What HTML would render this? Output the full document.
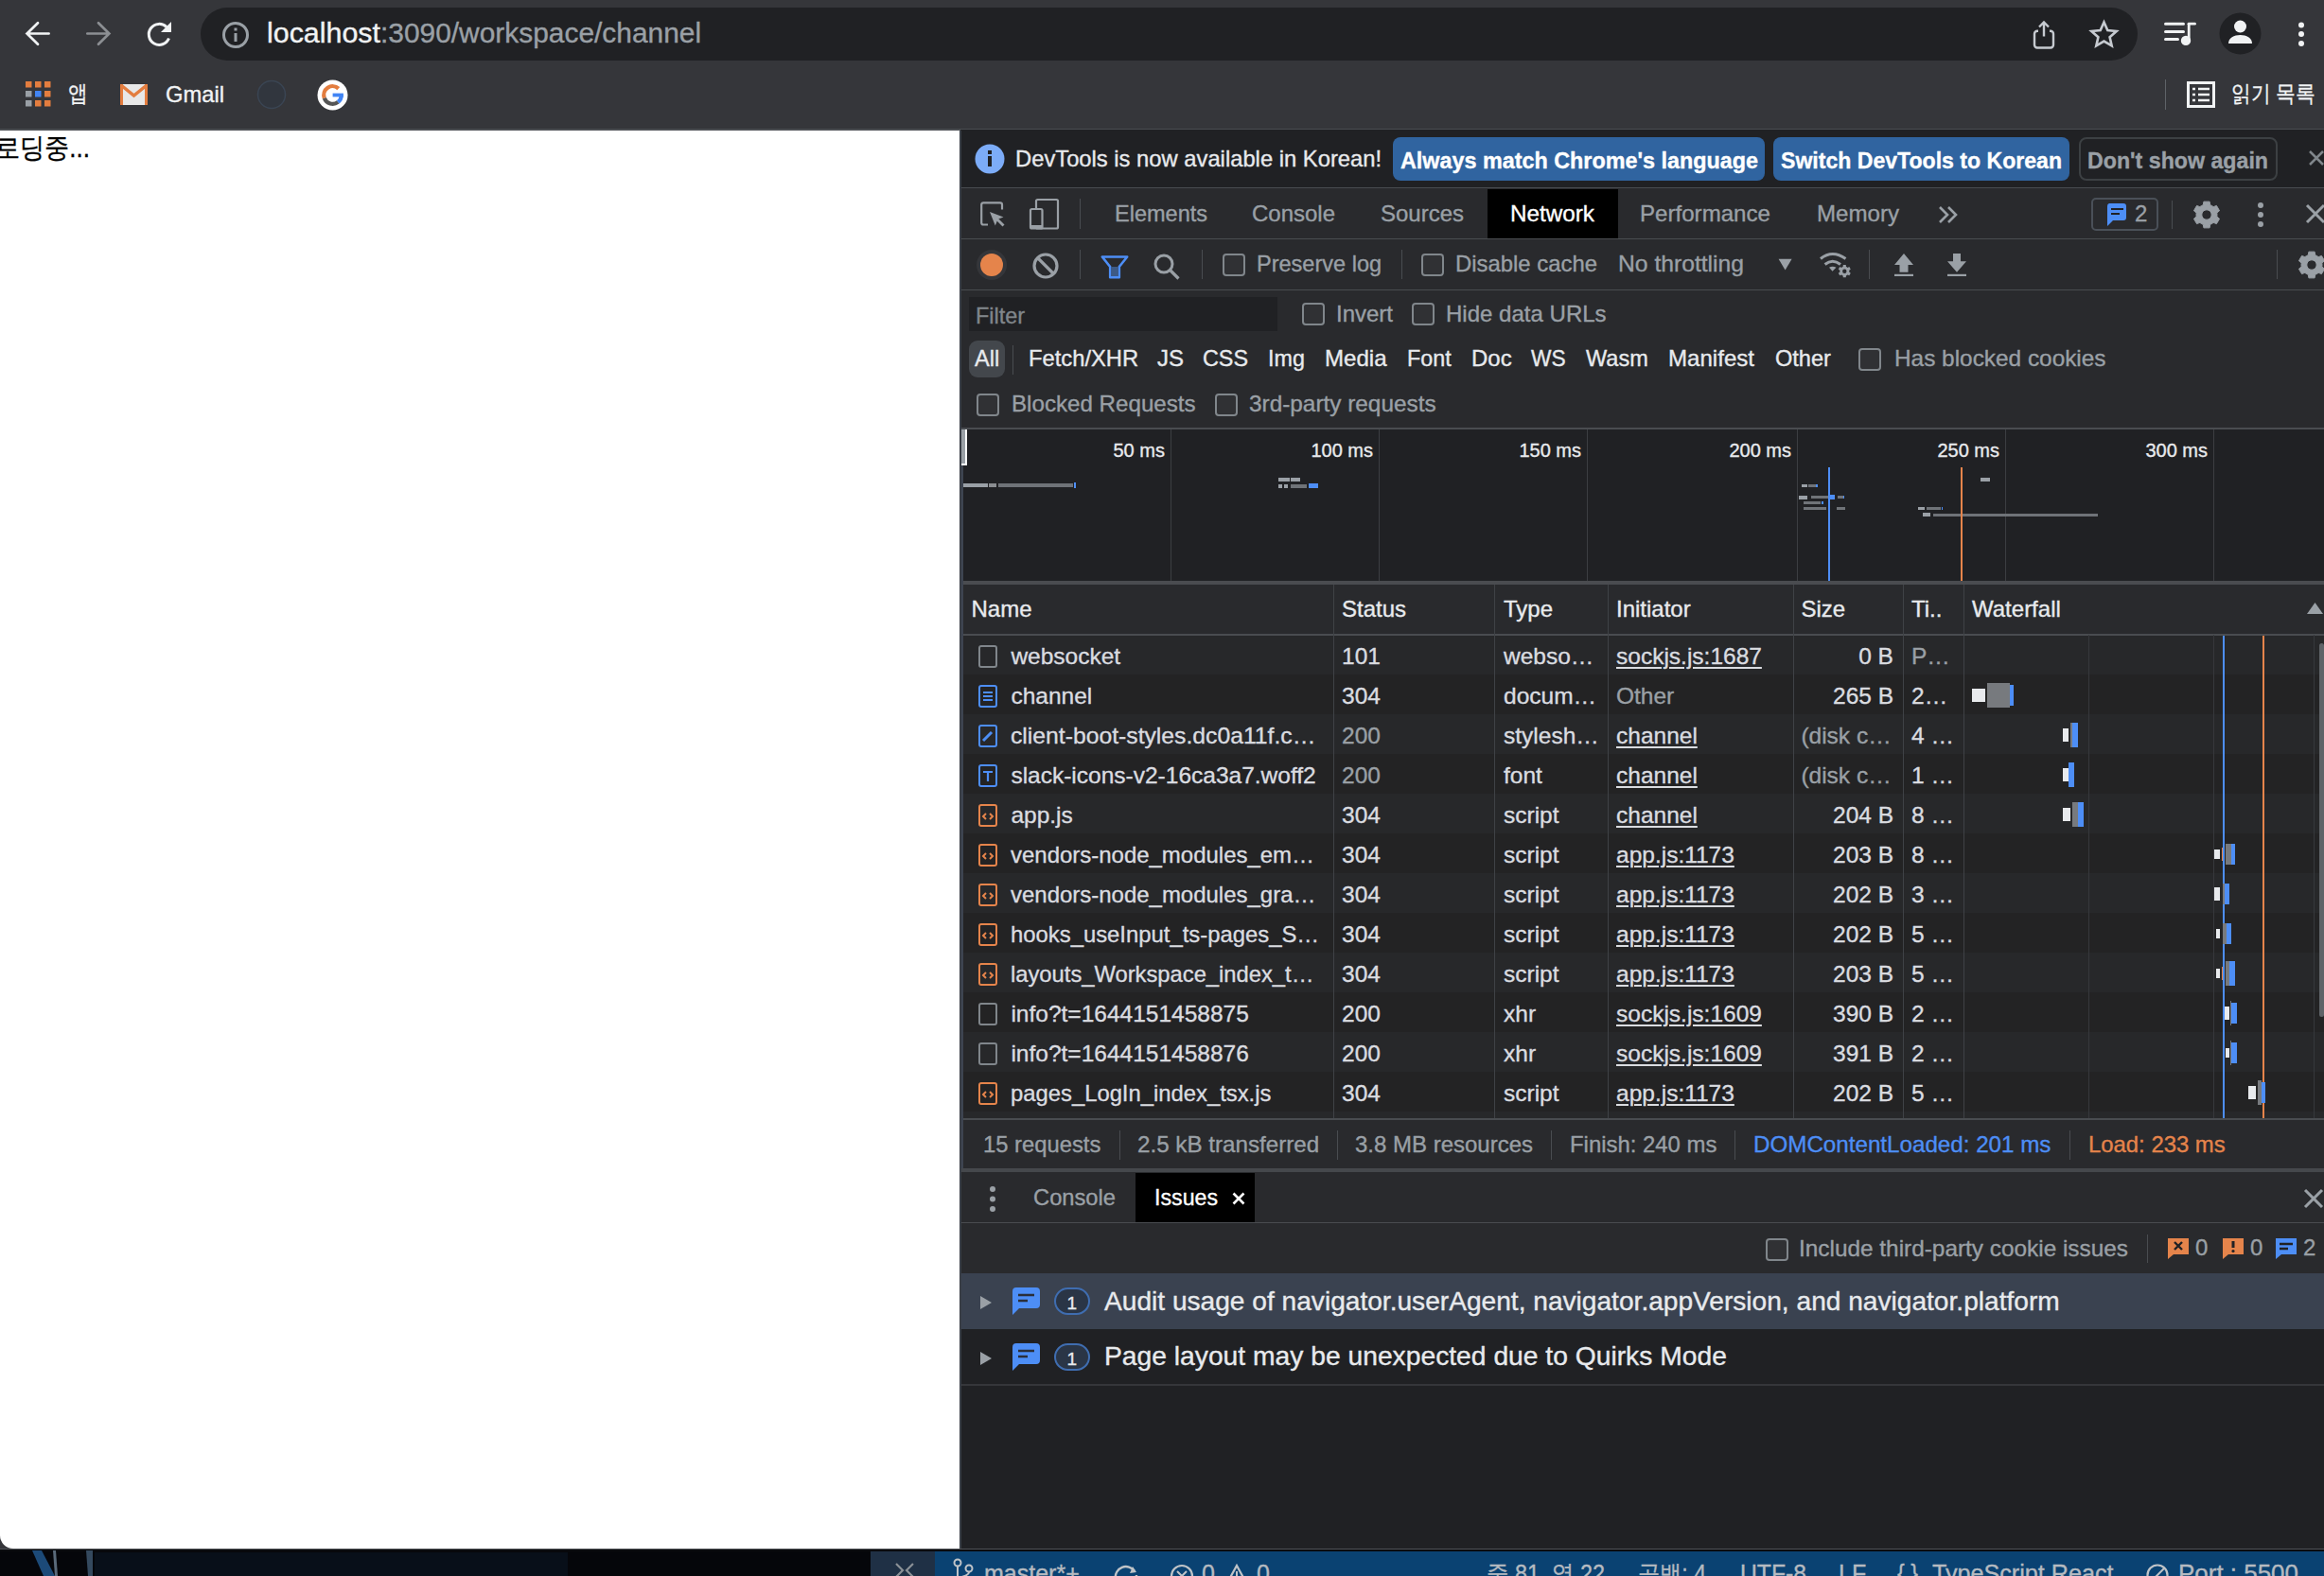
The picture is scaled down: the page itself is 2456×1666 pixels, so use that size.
<!DOCTYPE html>
<html><head><meta charset="utf-8"><style>
html,body{margin:0;padding:0;}
body{width:2456px;height:1666px;overflow:hidden;position:relative;background:#35363a;font-family:"Liberation Sans",sans-serif;}
.r{position:absolute;display:block;}
.t{position:absolute;white-space:nowrap;line-height:1;-webkit-text-stroke:0.35px currentColor;}
</style></head><body>
<div class="r" style="left:0px;top:0px;width:2456px;height:137px;background:#35363a;"></div>
<div class="r" style="left:0px;top:136px;width:2456px;height:2px;background:#4a4d51;"></div>
<div class="r" style="left:212px;top:8px;width:2047px;height:56px;background:#202124;border-radius:28px;"></div>
<svg class="r" style="left:24px;top:20px" width="32" height="32" viewBox="0 0 32 32"><path d="M27.6 15.5H4.5M16 4.2L4.5 15.5 16 26.8" stroke="#f1f3f4" stroke-width="2.7" fill="none" stroke-linecap="round"/></svg>
<svg class="r" style="left:88px;top:20px" width="32" height="32" viewBox="0 0 32 32"><path d="M4.3 15.5H27.4M16 4.2L27.4 15.5 16 26.8" stroke="#8c8f93" stroke-width="2.7" fill="none" stroke-linecap="round"/></svg>
<svg class="r" style="left:153px;top:20px" width="32" height="32" viewBox="0 0 32 32"><path d="M25.5 20.5A11 11 0 1 1 23 8.5" stroke="#f1f3f4" stroke-width="3" fill="none"/><path d="M28 3v11H17z" fill="#f1f3f4"/></svg>
<svg class="r" style="left:234px;top:22px" width="30" height="30" viewBox="0 0 30 30"><circle cx="15" cy="15" r="12.5" stroke="#9aa0a6" stroke-width="3" fill="none"/><rect x="13.5" y="13" width="3" height="9" fill="#9aa0a6"/><rect x="13.5" y="7.5" width="3" height="3" fill="#9aa0a6"/></svg>
<div class="t" style="left:281.5px;top:21.3px;font-size:29px;color:#f1f3f4;transform:scaleX(1.0486);transform-origin:left top;">localhost</div>
<div class="t" style="left:401.5px;top:21.3px;font-size:29px;color:#9aa0a6;transform:scaleX(1.0309);transform-origin:left top;">:3090/workspace/channel</div>
<svg class="r" style="left:2146px;top:20px" width="28" height="32" viewBox="0 0 28 32"><path d="M14 3.5v15M9 8.5l5-5 5 5" stroke="#c6cad0" stroke-width="2.4" fill="none"/><path d="M8 12.8H7a3 3 0 0 0-3 3V27.5a3 3 0 0 0 3 3h14a3 3 0 0 0 3-3V15.8a3 3 0 0 0-3-3h-1" stroke="#c6cad0" stroke-width="2.4" fill="none"/></svg>
<svg class="r" style="left:2207px;top:20px" width="34" height="32" viewBox="0 0 34 32"><path d="M16.5 3.5l3.8 8.6 9.4.9-7.1 6.2 2.1 9.2-8.2-4.8-8.2 4.8 2.1-9.2-7.1-6.2 9.4-.9z" stroke="#c6cad0" stroke-width="2.6" fill="none" stroke-linejoin="miter"/></svg>
<svg class="r" style="left:2286px;top:20px" width="36" height="30" viewBox="0 0 36 30"><path d="M2.5 5.3h19M2.5 13.5h19M2.5 21.5h13" stroke="#f1f3f4" stroke-width="3" stroke-linecap="round"/><path d="M27.2 5v18" stroke="#f1f3f4" stroke-width="2.8"/><path d="M27 5.2h6.5" stroke="#f1f3f4" stroke-width="2.8" stroke-linecap="round"/><circle cx="24" cy="22.9" r="5.2" fill="#f1f3f4"/></svg>
<svg class="r" style="left:2345px;top:13px" width="45" height="45" viewBox="0 0 45 45"><circle cx="22.5" cy="22.5" r="22" fill="#202124"/><circle cx="22.5" cy="15" r="6.5" fill="#f1f3f4"/><path d="M10 33c0-6 6-9 12.5-9S35 27 35 33z" fill="#f1f3f4"/></svg>
<svg class="r" style="left:2424px;top:20px" width="16" height="32" viewBox="0 0 16 32"><circle cx="8" cy="6.5" r="3" fill="#f1f3f4"/><circle cx="8" cy="16" r="3" fill="#f1f3f4"/><circle cx="8" cy="26" r="3" fill="#f1f3f4"/></svg>
<svg class="r" style="left:27px;top:86px" width="27" height="27" viewBox="0 0 27 27"><rect x="0" y="0" width="6.5" height="6.5" fill="#e37d3f"/><rect x="10" y="0" width="6.5" height="6.5" fill="#e37d3f"/><rect x="20" y="0" width="6.5" height="6.5" fill="#e37d3f"/><rect x="0" y="10" width="6.5" height="6.5" fill="#9aa0a6"/><rect x="10" y="10" width="6.5" height="6.5" fill="#4285f4"/><rect x="20" y="10" width="6.5" height="6.5" fill="#e37d3f"/><rect x="0" y="20" width="6.5" height="6.5" fill="#9aa0a6"/><rect x="10" y="20" width="6.5" height="6.5" fill="#e37d3f"/><rect x="20" y="20" width="6.5" height="6.5" fill="#e37d3f"/></svg>
<div class="t" style="left:72.0px;top:86.7px;font-size:24px;color:#f1f3f4;transform:scaleX(0.86);transform-origin:left top;">앱</div>
<svg class="r" style="left:127px;top:89px" width="29" height="22" viewBox="0 0 29 22"><rect x="0" y="0" width="29" height="22" fill="#e8e8e8"/><path d="M1.5 1.5L14.5 12 27.5 1.5" stroke="#e37d3f" stroke-width="3.5" fill="none"/><rect x="0" y="0" width="3" height="22" fill="#e37d3f"/><rect x="26" y="0" width="3" height="22" fill="#e37d3f"/></svg>
<div class="t" style="left:175.0px;top:87.7px;font-size:24px;color:#f1f3f4;transform:scaleX(0.9893);transform-origin:left top;">Gmail</div>
<svg class="r" style="left:271px;top:84px" width="32" height="32" viewBox="0 0 32 32"><circle cx="16" cy="16" r="14.5" fill="#31363e" stroke="#3a4553" stroke-width="1.5"/></svg>
<svg class="r" style="left:335px;top:84px" width="33" height="33" viewBox="0 0 33 33"><circle cx="16.5" cy="16.5" r="16" fill="#fff"/><path d="M22.72 9.59A9.3 9.3 0 0 0 7.76 19.68" stroke="#e37d3f" stroke-width="4.2" fill="none"/><path d="M7.76 19.68A9.3 9.3 0 0 0 22.23 23.83" stroke="#555" stroke-width="4.2" fill="none"/><path d="M22.23 23.83A9.3 9.3 0 0 0 25.8 16.5" stroke="#4285f4" stroke-width="4.2" fill="none"/><rect x="16.6" y="14.6" width="11.3" height="3.8" fill="#4285f4"/></svg>
<div class="r" style="left:2288px;top:84px;width:1px;height:32px;background:#5f6368;"></div>
<svg class="r" style="left:2311px;top:86px" width="30" height="28" viewBox="0 0 30 28"><rect x="1.5" y="1.5" width="27" height="25" stroke="#f1f3f4" stroke-width="3" fill="none"/><path d="M6 8h3M12 8h12M6 14h3M12 14h12M6 20h3M12 20h12" stroke="#f1f3f4" stroke-width="2.5"/></svg>
<div class="t" style="left:2358.0px;top:86.7px;font-size:24px;color:#f1f3f4;transform:scaleX(0.8620);transform-origin:left top;">읽기 목록</div>
<div class="r" style="left:0px;top:138px;width:1014px;height:1499px;background:#ffffff;border-bottom-left-radius:14px;"></div>
<div class="t" style="left:-5.0px;top:141.5px;font-size:29px;color:#000000;transform:scaleX(0.9);transform-origin:left top;">로딩중...</div>
<div class="r" style="left:0px;top:1637px;width:2456px;height:29px;background:#05060a;"></div>
<div class="r" style="left:1014px;top:138px;width:1442px;height:1499px;background:#202124;"></div>
<div class="r" style="left:1014px;top:137px;width:1442px;height:1px;background:#55585c;"></div>
<div class="r" style="left:1014px;top:138px;width:2px;height:1499px;background:#3a3e45;"></div>
<div class="r" style="left:1015px;top:137px;width:1442px;height:61px;background:#202124;"></div>
<div class="r" style="left:1015px;top:198px;width:1442px;height:1px;background:#494c50;"></div>
<svg class="r" style="left:1030px;top:152px" width="32" height="32" viewBox="0 0 32 32"><circle cx="16" cy="16" r="15.5" fill="#7cacf8"/><rect x="14" y="13" width="4" height="11" fill="#202124"/><rect x="14" y="7" width="4" height="4" fill="#202124"/></svg>
<div class="t" style="left:1073.0px;top:155.7px;font-size:24px;color:#e8eaed;transform:scaleX(0.9902);transform-origin:left top;">DevTools is now available in Korean!</div>
<div class="r" style="left:1472px;top:145px;width:393px;height:46px;background:#3064a0;border-radius:8px;"></div>
<div class="t" style="left:1480.0px;top:158.5px;font-size:23px;color:#ffffff;font-weight:bold;transform:scaleX(1.0152);transform-origin:left top;">Always match Chrome's language</div>
<div class="r" style="left:1874px;top:145px;width:313px;height:46px;background:#3064a0;border-radius:8px;"></div>
<div class="t" style="left:1882.0px;top:158.5px;font-size:23px;color:#ffffff;font-weight:bold;transform:scaleX(1.0031);transform-origin:left top;">Switch DevTools to Korean</div>
<div class="r" style="left:2197px;top:145px;width:210px;height:46px;background:transparent;border:2px solid #3c4043;box-sizing:border-box;border-radius:8px;"></div>
<div class="t" style="left:2206.0px;top:158.5px;font-size:23px;color:#9aa0a6;font-weight:bold;transform:scaleX(1.0081);transform-origin:left top;">Don't show again</div>
<svg class="r" style="left:2439px;top:158px" width="18" height="18" viewBox="0 0 18 18"><path d="M2 2l14 14M16 2L2 16" stroke="#80868b" stroke-width="2.5"/></svg>
<div class="r" style="left:1015px;top:199px;width:1442px;height:53px;background:#292a2d;"></div>
<div class="r" style="left:1015px;top:252px;width:1442px;height:1px;background:#494c50;"></div>
<svg class="r" style="left:1034px;top:212px" width="30" height="30" viewBox="0 0 30 30"><path d="M10 25.5H5.2a2 2 0 0 1-2-2V4.3a2 2 0 0 1 2-2H23a2 2 0 0 1 2 2V9.5" stroke="#9aa0a6" stroke-width="2.2" fill="none"/><path d="M12 12L26.5 17.5 20.5 19.8 17.8 26.5z" fill="#9aa0a6"/><path d="M19.5 19.5L26.5 26.5" stroke="#9aa0a6" stroke-width="2.8"/></svg>
<svg class="r" style="left:1086px;top:209px" width="34" height="34" viewBox="0 0 34 34"><rect x="9" y="2" width="23" height="30.5" stroke="#9aa0a6" stroke-width="2.2" fill="none" rx="1.5"/><rect x="3" y="12" width="12.5" height="20.5" stroke="#9aa0a6" stroke-width="2.2" fill="#292a2d" rx="1.5"/><rect x="3" y="29" width="12.5" height="3.5" fill="#9aa0a6"/></svg>
<div class="r" style="left:1141px;top:210px;width:1px;height:32px;background:#494c50;"></div>
<div class="t" style="left:1178.0px;top:213.7px;font-size:24px;color:#9aa0a6;transform:scaleX(0.9795);transform-origin:left top;">Elements</div>
<div class="t" style="left:1323.0px;top:213.7px;font-size:24px;color:#9aa0a6;transform:scaleX(0.9996);transform-origin:left top;">Console</div>
<div class="t" style="left:1459.0px;top:213.7px;font-size:24px;color:#9aa0a6;transform:scaleX(0.9995);transform-origin:left top;">Sources</div>
<div class="r" style="left:1572px;top:200px;width:138px;height:52px;background:#000000;"></div>
<div class="t" style="left:1596.0px;top:213.7px;font-size:24px;color:#ffffff;transform:scaleX(1.0112);transform-origin:left top;">Network</div>
<div class="t" style="left:1733.0px;top:213.7px;font-size:24px;color:#9aa0a6;transform:scaleX(1.0043);transform-origin:left top;">Performance</div>
<div class="t" style="left:1920.0px;top:213.7px;font-size:24px;color:#9aa0a6;transform:scaleX(1.0036);transform-origin:left top;">Memory</div>
<svg class="r" style="left:2048px;top:217px" width="22" height="20" viewBox="0 0 22 20"><path d="M2 2l8 8-8 8M11 2l8 8-8 8" stroke="#9aa0a6" stroke-width="2.6" fill="none"/></svg>
<div class="r" style="left:2210px;top:209px;width:71px;height:35px;background:transparent;border:2px solid #4a5058;box-sizing:border-box;border-radius:5px;"></div>
<svg class="r" style="left:2224px;top:214px" width="26" height="26" viewBox="0 0 26 26"><path d="M5 1h15a3 3 0 0 1 3 3v12a3 3 0 0 1-3 3H9l-6 6V4a3 3 0 0 1 2-3z" fill="#4d8ef6"/><path d="M7 7h13M7 12h9" stroke="#202124" stroke-width="2.2"/></svg>
<div class="t" style="left:2256.0px;top:213.7px;font-size:24px;color:#9aa0a6;">2</div>
<div class="r" style="left:2295px;top:212px;width:1px;height:30px;background:#494c50;"></div>
<svg class="r" style="left:2316px;top:211px" width="32" height="32" viewBox="0 0 32 32"><path fill="#9aa0a6" fill-rule="evenodd" stroke="#9aa0a6" stroke-width="1" stroke-linejoin="round" d="M10.50 6.47 L12.33 5.63 L12.90 2.14 L19.10 2.14 L19.67 5.63 L21.50 6.47 L23.15 7.64 L26.45 6.39 L29.55 11.75 L26.81 13.99 L27.00 16.00 L26.81 18.01 L29.55 20.25 L26.45 25.61 L23.15 24.36 L21.50 25.53 L19.67 26.37 L19.10 29.86 L12.90 29.86 L12.33 26.37 L10.50 25.53 L8.85 24.36 L5.55 25.61 L2.45 20.25 L5.19 18.01 L5.00 16.00 L5.19 13.99 L2.45 11.75 L5.55 6.39 L8.85 7.64ZM21.20 16.00A5.2 5.2 0 1 0 10.80 16.00A5.2 5.2 0 1 0 21.20 16.00Z"/></svg>
<svg class="r" style="left:2381px;top:211px" width="16" height="32" viewBox="0 0 16 32"><circle cx="8" cy="6" r="3" fill="#9aa0a6"/><circle cx="8" cy="16" r="3" fill="#9aa0a6"/><circle cx="8" cy="26" r="3" fill="#9aa0a6"/></svg>
<svg class="r" style="left:2436px;top:215px" width="22" height="24" viewBox="0 0 22 24"><path d="M2 2l18 18M20 2L2 20" stroke="#9aa0a6" stroke-width="3"/></svg>
<div class="r" style="left:1015px;top:253px;width:1442px;height:53px;background:#292a2d;"></div>
<div class="r" style="left:1015px;top:306px;width:1442px;height:1px;background:#494c50;"></div>
<svg class="r" style="left:1031px;top:263px" width="34" height="34" viewBox="0 0 34 34"><circle cx="17" cy="17" r="16" fill="#35363a"/><circle cx="17" cy="17" r="12" fill="#e5844b"/></svg>
<svg class="r" style="left:1090px;top:266px" width="30" height="30" viewBox="0 0 30 30"><circle cx="15" cy="15" r="12" stroke="#9aa0a6" stroke-width="3.2" fill="none"/><path d="M7 7l16 16" stroke="#9aa0a6" stroke-width="3.2"/></svg>
<div class="r" style="left:1141px;top:264px;width:1px;height:31px;background:#494c50;"></div>
<svg class="r" style="left:1162px;top:269px" width="32" height="27" viewBox="0 0 32 27"><path d="M2.8 2.5H29.2L20.8 13V24.3H11.2V13Z" stroke="#4d8ef6" stroke-width="2.6" fill="none" stroke-linejoin="round"/><rect x="12.5" y="13" width="7" height="10" fill="#3d5a85"/></svg>
<svg class="r" style="left:1218px;top:267px" width="32" height="30" viewBox="0 0 32 30"><circle cx="12" cy="12" r="9" stroke="#9aa0a6" stroke-width="3" fill="none"/><path d="M18.5 18.5l9 9" stroke="#9aa0a6" stroke-width="3.2"/></svg>
<div class="r" style="left:1270px;top:264px;width:1px;height:31px;background:#494c50;"></div>
<div class="r" style="left:1292px;top:268px;width:24px;height:24px;background:#303134;border:2px solid #80868b;box-sizing:border-box;border-radius:4px;"></div>
<div class="t" style="left:1328.0px;top:266.7px;font-size:24px;color:#9aa0a6;transform:scaleX(0.9802);transform-origin:left top;">Preserve log</div>
<div class="r" style="left:1481px;top:264px;width:1px;height:31px;background:#494c50;"></div>
<div class="r" style="left:1502px;top:268px;width:24px;height:24px;background:#303134;border:2px solid #80868b;box-sizing:border-box;border-radius:4px;"></div>
<div class="t" style="left:1538.0px;top:266.7px;font-size:24px;color:#9aa0a6;transform:scaleX(0.9952);transform-origin:left top;">Disable cache</div>
<div class="t" style="left:1710.0px;top:266.7px;font-size:24px;color:#9aa0a6;transform:scaleX(1.0279);transform-origin:left top;">No throttling</div>
<svg class="r" style="left:1878px;top:272px" width="18" height="15" viewBox="0 0 18 15"><path d="M1.6 1.8h14L8.6 13.6z" fill="#9aa0a6"/></svg>
<svg class="r" style="left:1920px;top:264px" width="38" height="32" viewBox="0 0 38 32"><path d="M4 9.5Q16.4 -0.5 30.5 9.5" stroke="#9aa0a6" stroke-width="3" fill="none"/><path d="M8.6 15.5Q16.6 9 25 15.5" stroke="#9aa0a6" stroke-width="3" fill="none"/><path d="M13 18.8Q16.6 16.8 20.5 18.8L16.5 22.8Z" fill="#9aa0a6"/><path fill="#9aa0a6" fill-rule="evenodd" d="M26.80 18.37 L27.63 17.99 L27.82 16.06 L30.78 16.06 L30.97 17.99 L31.80 18.37 L32.55 18.90 L34.31 18.10 L35.79 20.67 L34.22 21.79 L34.30 22.70 L34.22 23.61 L35.79 24.73 L34.31 27.30 L32.55 26.50 L31.80 27.03 L30.97 27.41 L30.78 29.34 L27.82 29.34 L27.63 27.41 L26.80 27.03 L26.05 26.50 L24.29 27.30 L22.81 24.73 L24.38 23.61 L24.30 22.70 L24.38 21.79 L22.81 20.67 L24.29 18.10 L26.05 18.90ZM31.50 22.70A2.2 2.2 0 1 0 27.10 22.70A2.2 2.2 0 1 0 31.50 22.70Z"/></svg>
<div class="r" style="left:1975px;top:264px;width:1px;height:31px;background:#494c50;"></div>
<svg class="r" style="left:1999px;top:266px" width="26" height="30" viewBox="0 0 26 30"><path d="M13 2l10 12h-5.5v7.7h-9V14H3z" fill="#9aa0a6"/><rect x="3" y="23.8" width="20" height="2.2" fill="#9aa0a6"/></svg>
<svg class="r" style="left:2055px;top:266px" width="26" height="30" viewBox="0 0 26 30"><path d="M13 21.7L3 10.3h6V2h8v8.3h6z" fill="#9aa0a6"/><rect x="3" y="23.8" width="20" height="2.2" fill="#9aa0a6"/></svg>
<div class="r" style="left:2406px;top:264px;width:1px;height:31px;background:#494c50;"></div>
<svg class="r" style="left:2427px;top:264px" width="32" height="32" viewBox="0 0 32 32"><path fill="#9aa0a6" fill-rule="evenodd" stroke="#9aa0a6" stroke-width="1" stroke-linejoin="round" d="M10.50 6.47 L12.33 5.63 L12.90 2.14 L19.10 2.14 L19.67 5.63 L21.50 6.47 L23.15 7.64 L26.45 6.39 L29.55 11.75 L26.81 13.99 L27.00 16.00 L26.81 18.01 L29.55 20.25 L26.45 25.61 L23.15 24.36 L21.50 25.53 L19.67 26.37 L19.10 29.86 L12.90 29.86 L12.33 26.37 L10.50 25.53 L8.85 24.36 L5.55 25.61 L2.45 20.25 L5.19 18.01 L5.00 16.00 L5.19 13.99 L2.45 11.75 L5.55 6.39 L8.85 7.64ZM21.20 16.00A5.2 5.2 0 1 0 10.80 16.00A5.2 5.2 0 1 0 21.20 16.00Z"/></svg>
<div class="r" style="left:1015px;top:307px;width:1442px;height:146px;background:#292a2d;"></div>
<div class="r" style="left:1015px;top:452px;width:1442px;height:2px;background:#494c50;"></div>
<div class="r" style="left:1024px;top:314px;width:326px;height:36px;background:#202124;"></div>
<div class="t" style="left:1031.0px;top:321.7px;font-size:24px;color:#80868b;transform:scaleX(0.9756);transform-origin:left top;">Filter</div>
<div class="r" style="left:1376px;top:320px;width:24px;height:24px;background:#303134;border:2px solid #80868b;box-sizing:border-box;border-radius:4px;"></div>
<div class="t" style="left:1412.0px;top:319.7px;font-size:24px;color:#9aa0a6;transform:scaleX(1.0000);transform-origin:left top;">Invert</div>
<div class="r" style="left:1492px;top:320px;width:24px;height:24px;background:#303134;border:2px solid #80868b;box-sizing:border-box;border-radius:4px;"></div>
<div class="t" style="left:1528.0px;top:319.7px;font-size:24px;color:#9aa0a6;transform:scaleX(1.0012);transform-origin:left top;">Hide data URLs</div>
<div class="r" style="left:1024px;top:360px;width:38px;height:39px;background:#43474c;border-radius:9px;"></div>
<div class="t" style="left:1030.0px;top:367.2px;font-size:24px;color:#e8eaed;transform:scaleX(0.9803);transform-origin:left top;">All</div>
<div class="r" style="left:1070px;top:365px;width:1px;height:31px;background:#494c50;"></div>
<div class="t" style="left:1086.7px;top:367.2px;font-size:24px;color:#e8eaed;transform:scaleX(0.9893);transform-origin:left top;">Fetch/XHR</div>
<div class="t" style="left:1222.8px;top:367.2px;font-size:24px;color:#e8eaed;transform:scaleX(0.9994);transform-origin:left top;">JS</div>
<div class="t" style="left:1270.8px;top:367.2px;font-size:24px;color:#e8eaed;transform:scaleX(0.9725);transform-origin:left top;">CSS</div>
<div class="t" style="left:1340.0px;top:367.2px;font-size:24px;color:#e8eaed;transform:scaleX(0.9721);transform-origin:left top;">Img</div>
<div class="t" style="left:1400.0px;top:367.2px;font-size:24px;color:#e8eaed;transform:scaleX(1.0037);transform-origin:left top;">Media</div>
<div class="t" style="left:1487.0px;top:367.2px;font-size:24px;color:#e8eaed;transform:scaleX(0.9705);transform-origin:left top;">Font</div>
<div class="t" style="left:1555.0px;top:367.2px;font-size:24px;color:#e8eaed;transform:scaleX(0.9983);transform-origin:left top;">Doc</div>
<div class="t" style="left:1618.4px;top:367.2px;font-size:24px;color:#e8eaed;transform:scaleX(0.9464);transform-origin:left top;">WS</div>
<div class="t" style="left:1676.0px;top:367.2px;font-size:24px;color:#e8eaed;transform:scaleX(0.9805);transform-origin:left top;">Wasm</div>
<div class="t" style="left:1763.0px;top:367.2px;font-size:24px;color:#e8eaed;transform:scaleX(1.0033);transform-origin:left top;">Manifest</div>
<div class="t" style="left:1875.5px;top:367.2px;font-size:24px;color:#e8eaed;transform:scaleX(0.9812);transform-origin:left top;">Other</div>
<div class="r" style="left:1964px;top:368px;width:24px;height:24px;background:#303134;border:2px solid #80868b;box-sizing:border-box;border-radius:4px;"></div>
<div class="t" style="left:2001.5px;top:367.2px;font-size:24px;color:#9aa0a6;transform:scaleX(1.0155);transform-origin:left top;">Has blocked cookies</div>
<div class="r" style="left:1032px;top:416px;width:24px;height:24px;background:#303134;border:2px solid #80868b;box-sizing:border-box;border-radius:4px;"></div>
<div class="t" style="left:1069.0px;top:415.2px;font-size:24px;color:#9aa0a6;transform:scaleX(1.0061);transform-origin:left top;">Blocked Requests</div>
<div class="r" style="left:1284px;top:416px;width:24px;height:24px;background:#303134;border:2px solid #80868b;box-sizing:border-box;border-radius:4px;"></div>
<div class="t" style="left:1320.0px;top:415.2px;font-size:24px;color:#9aa0a6;transform:scaleX(1.0146);transform-origin:left top;">3rd-party requests</div>
<div class="r" style="left:1015px;top:454px;width:1442px;height:160px;background:#202124;"></div>
<div class="r" style="left:1015px;top:614px;width:1442px;height:4px;background:#4a4c50;"></div>
<div class="r" style="left:1237px;top:454px;width:1px;height:160px;background:#3c3e42;"></div>
<div class="t" style="left:1176.5px;top:465.5px;font-size:20px;color:#e8eaed;">50 ms</div>
<div class="r" style="left:1457px;top:454px;width:1px;height:160px;background:#3c3e42;"></div>
<div class="t" style="left:1385.4px;top:465.5px;font-size:20px;color:#e8eaed;">100 ms</div>
<div class="r" style="left:1677px;top:454px;width:1px;height:160px;background:#3c3e42;"></div>
<div class="t" style="left:1605.4px;top:465.5px;font-size:20px;color:#e8eaed;">150 ms</div>
<div class="r" style="left:1899px;top:454px;width:1px;height:160px;background:#3c3e42;"></div>
<div class="t" style="left:1827.4px;top:465.5px;font-size:20px;color:#e8eaed;">200 ms</div>
<div class="r" style="left:2119px;top:454px;width:1px;height:160px;background:#3c3e42;"></div>
<div class="t" style="left:2047.4px;top:465.5px;font-size:20px;color:#e8eaed;">250 ms</div>
<div class="r" style="left:2339px;top:454px;width:1px;height:160px;background:#3c3e42;"></div>
<div class="t" style="left:2267.4px;top:465.5px;font-size:20px;color:#e8eaed;">300 ms</div>
<div class="r" style="left:1016px;top:454px;width:4px;height:37px;background:#9aa0a6;"></div>
<div class="r" style="left:1020px;top:454px;width:2px;height:38px;background:#ffffff;"></div>
<div class="r" style="left:1016px;top:490px;width:6px;height:2px;background:#ffffff;"></div>
<div class="r" style="left:1017px;top:511px;width:27px;height:4px;background:#9aa0a6;"></div>
<div class="r" style="left:1045px;top:511px;width:8px;height:4px;background:#8a8d91;"></div>
<div class="r" style="left:1055px;top:511px;width:79px;height:4px;background:#6f7378;"></div>
<div class="r" style="left:1135px;top:510px;width:2px;height:6px;background:#4d8ef6;"></div>
<div class="r" style="left:1351px;top:505px;width:12px;height:4px;background:#9aa0a6;"></div>
<div class="r" style="left:1364px;top:505px;width:10px;height:4px;background:#9aa0a6;"></div>
<div class="r" style="left:1351px;top:512px;width:4px;height:4px;background:#9aa0a6;"></div>
<div class="r" style="left:1357px;top:512px;width:4px;height:4px;background:#9aa0a6;"></div>
<div class="r" style="left:1364px;top:512px;width:17px;height:4px;background:#6f7378;"></div>
<div class="r" style="left:1383px;top:511px;width:10px;height:5px;background:#4d8ef6;"></div>
<div class="r" style="left:1904px;top:512px;width:6px;height:3px;background:#9aa0a6;"></div>
<div class="r" style="left:1911px;top:512px;width:8px;height:3px;background:#6f7378;"></div>
<div class="r" style="left:1919px;top:512px;width:2px;height:3px;background:#4d8ef6;"></div>
<div class="r" style="left:1901px;top:524px;width:9px;height:4px;background:#9aa0a6;"></div>
<div class="r" style="left:1914px;top:524px;width:20px;height:3px;background:#6f7378;"></div>
<div class="r" style="left:1934px;top:523px;width:5px;height:5px;background:#4d8ef6;"></div>
<div class="r" style="left:1942px;top:524px;width:6px;height:3px;background:#6f7378;"></div>
<div class="r" style="left:1948px;top:524px;width:1px;height:3px;background:#4d8ef6;"></div>
<div class="r" style="left:1906px;top:530px;width:18px;height:3px;background:#6f7378;"></div>
<div class="r" style="left:1925px;top:530px;width:2px;height:3px;background:#4d8ef6;"></div>
<div class="r" style="left:1906px;top:536px;width:24px;height:3px;background:#6f7378;"></div>
<div class="r" style="left:1941px;top:536px;width:9px;height:3px;background:#6f7378;"></div>
<div class="r" style="left:2093px;top:505px;width:10px;height:4px;background:#9aa0a6;"></div>
<div class="r" style="left:2027px;top:536px;width:7px;height:3px;background:#9aa0a6;"></div>
<div class="r" style="left:2036px;top:536px;width:15px;height:3px;background:#6f7378;"></div>
<div class="r" style="left:2052px;top:536px;width:1px;height:3px;background:#4d8ef6;"></div>
<div class="r" style="left:2032px;top:542px;width:8px;height:4px;background:#9aa0a6;"></div>
<div class="r" style="left:2043px;top:543px;width:174px;height:3px;background:#6f7378;"></div>
<div class="r" style="left:1932px;top:494px;width:2px;height:120px;background:#4d8ef6;"></div>
<div class="r" style="left:2072px;top:494px;width:2px;height:120px;background:#e5844b;"></div>
<div class="r" style="left:1015px;top:618px;width:1442px;height:53px;background:#292a2d;"></div>
<div class="r" style="left:1015px;top:671px;width:1442px;height:42px;background:#27282a;"></div>
<div class="r" style="left:1015px;top:713px;width:1442px;height:42px;background:#232324;"></div>
<div class="r" style="left:1015px;top:755px;width:1442px;height:42px;background:#27282a;"></div>
<div class="r" style="left:1015px;top:797px;width:1442px;height:42px;background:#232324;"></div>
<div class="r" style="left:1015px;top:839px;width:1442px;height:42px;background:#27282a;"></div>
<div class="r" style="left:1015px;top:881px;width:1442px;height:42px;background:#232324;"></div>
<div class="r" style="left:1015px;top:923px;width:1442px;height:42px;background:#27282a;"></div>
<div class="r" style="left:1015px;top:965px;width:1442px;height:42px;background:#232324;"></div>
<div class="r" style="left:1015px;top:1007px;width:1442px;height:42px;background:#27282a;"></div>
<div class="r" style="left:1015px;top:1049px;width:1442px;height:42px;background:#232324;"></div>
<div class="r" style="left:1015px;top:1091px;width:1442px;height:42px;background:#27282a;"></div>
<div class="r" style="left:1015px;top:1133px;width:1442px;height:42px;background:#232324;"></div>
<div class="r" style="left:1015px;top:1175px;width:1442px;height:7px;background:#27282a;"></div>
<div class="r" style="left:1015px;top:670px;width:1442px;height:2px;background:#494c50;"></div>
<div class="r" style="left:1409px;top:618px;width:1px;height:564px;background:#3f4246;"></div>
<div class="r" style="left:1579px;top:618px;width:1px;height:564px;background:#3f4246;"></div>
<div class="r" style="left:1699px;top:618px;width:1px;height:564px;background:#3f4246;"></div>
<div class="r" style="left:1895px;top:618px;width:1px;height:564px;background:#3f4246;"></div>
<div class="r" style="left:2011px;top:618px;width:1px;height:564px;background:#3f4246;"></div>
<div class="r" style="left:2075px;top:618px;width:1px;height:564px;background:#3f4246;"></div>
<div class="r" style="left:2207px;top:671px;width:1px;height:511px;background:#36383c;"></div>
<div class="r" style="left:2339px;top:671px;width:1px;height:511px;background:#36383c;"></div>
<div class="r" style="left:2445px;top:671px;width:1px;height:511px;background:#36383c;"></div>
<div class="r" style="left:2349px;top:672px;width:2px;height:510px;background:#4d8ef6;"></div>
<div class="r" style="left:2391px;top:672px;width:2px;height:510px;background:#e5844b;"></div>
<div class="t" style="left:1026.5px;top:631.7px;font-size:24px;color:#e8eaed;">Name</div>
<div class="t" style="left:1418.0px;top:631.7px;font-size:24px;color:#e8eaed;">Status</div>
<div class="t" style="left:1589.0px;top:631.7px;font-size:24px;color:#e8eaed;">Type</div>
<div class="t" style="left:1708.0px;top:631.7px;font-size:24px;color:#e8eaed;">Initiator</div>
<div class="t" style="left:1903.4px;top:631.7px;font-size:24px;color:#e8eaed;">Size</div>
<div class="t" style="left:2020.0px;top:631.7px;font-size:24px;color:#e8eaed;">Ti..</div>
<div class="t" style="left:2084.0px;top:631.7px;font-size:24px;color:#e8eaed;">Waterfall</div>
<svg class="r" style="left:2437px;top:636px" width="19" height="14" viewBox="0 0 19 14"><path d="M9.5 1L18 13H1z" fill="#9aa0a6"/></svg>
<svg class="r" style="left:1034px;top:682px" width="20" height="24" viewBox="0 0 20 24"><rect x="1" y="1" width="18" height="22" rx="2" stroke="#80868b" stroke-width="2" fill="none"/></svg>
<div class="t" style="left:1068.4px;top:681.5px;font-size:24.5px;color:#dadce0;">websocket</div>
<div class="t" style="left:1418.0px;top:681.5px;font-size:24.5px;color:#dadce0;">101</div>
<div class="t" style="left:1589.0px;top:681.5px;font-size:24.5px;color:#dadce0;">webso…</div>
<div class="t" style="left:1708.0px;top:681.5px;font-size:24.5px;color:#dadce0;text-decoration:underline;text-underline-offset:3px;text-decoration-thickness:2px;">sockjs.js:1687</div>
<div class="t" style="left:1964.2px;top:681.5px;font-size:24.5px;color:#dadce0;">0 B</div>
<div class="t" style="left:2020.0px;top:681.5px;font-size:24.5px;color:#9aa0a6;">P…</div>
<svg class="r" style="left:1034px;top:724px" width="20" height="24" viewBox="0 0 20 24"><rect x="1" y="1" width="18" height="22" rx="2" stroke="#4d8ef6" stroke-width="2" fill="none"/><path d="M5 8h10M5 12h10M5 16h10" stroke="#4d8ef6" stroke-width="2"/></svg>
<div class="t" style="left:1068.4px;top:723.5px;font-size:24.5px;color:#dadce0;">channel</div>
<div class="t" style="left:1418.0px;top:723.5px;font-size:24.5px;color:#dadce0;">304</div>
<div class="t" style="left:1589.0px;top:723.5px;font-size:24.5px;color:#dadce0;">docum…</div>
<div class="t" style="left:1708.0px;top:723.5px;font-size:24.5px;color:#9aa0a6;">Other</div>
<div class="t" style="left:1937.0px;top:723.5px;font-size:24.5px;color:#dadce0;">265 B</div>
<div class="t" style="left:2020.0px;top:723.5px;font-size:24.5px;color:#dadce0;">2…</div>
<svg class="r" style="left:1034px;top:766px" width="20" height="24" viewBox="0 0 20 24"><rect x="1" y="1" width="18" height="22" rx="2" stroke="#4d8ef6" stroke-width="2" fill="none"/><path d="M5 17l9-9" stroke="#4d8ef6" stroke-width="3"/></svg>
<div class="t" style="left:1068.4px;top:765.5px;font-size:24.5px;color:#dadce0;transform:scaleX(1.0089);transform-origin:left top;">client-boot-styles.dc0a11f.c…</div>
<div class="t" style="left:1418.0px;top:765.5px;font-size:24.5px;color:#9aa0a6;">200</div>
<div class="t" style="left:1589.0px;top:765.5px;font-size:24.5px;color:#dadce0;">stylesh…</div>
<div class="t" style="left:1708.0px;top:765.5px;font-size:24.5px;color:#dadce0;text-decoration:underline;text-underline-offset:3px;text-decoration-thickness:2px;">channel</div>
<div class="t" style="left:1903.4px;top:765.5px;font-size:24.5px;color:#9aa0a6;">(disk c…</div>
<div class="t" style="left:2020.0px;top:765.5px;font-size:24.5px;color:#dadce0;">4 …</div>
<svg class="r" style="left:1034px;top:808px" width="20" height="24" viewBox="0 0 20 24"><rect x="1" y="1" width="18" height="22" rx="2" stroke="#4d8ef6" stroke-width="2" fill="none"/><path d="M5 8h10M10 8v10" stroke="#4d8ef6" stroke-width="2.2"/></svg>
<div class="t" style="left:1068.4px;top:807.5px;font-size:24.5px;color:#dadce0;">slack-icons-v2-16ca3a7.woff2</div>
<div class="t" style="left:1418.0px;top:807.5px;font-size:24.5px;color:#9aa0a6;">200</div>
<div class="t" style="left:1589.0px;top:807.5px;font-size:24.5px;color:#dadce0;">font</div>
<div class="t" style="left:1708.0px;top:807.5px;font-size:24.5px;color:#dadce0;text-decoration:underline;text-underline-offset:3px;text-decoration-thickness:2px;">channel</div>
<div class="t" style="left:1903.4px;top:807.5px;font-size:24.5px;color:#9aa0a6;">(disk c…</div>
<div class="t" style="left:2020.0px;top:807.5px;font-size:24.5px;color:#dadce0;">1 …</div>
<svg class="r" style="left:1034px;top:850px" width="20" height="24" viewBox="0 0 20 24"><rect x="1" y="1" width="18" height="22" rx="2" stroke="#e5844b" stroke-width="2" fill="none"/><path d="M8 10l-3 3 3 3M12 10l3 3-3 3" stroke="#e5844b" stroke-width="2" fill="none"/></svg>
<div class="t" style="left:1068.4px;top:849.5px;font-size:24.5px;color:#dadce0;">app.js</div>
<div class="t" style="left:1418.0px;top:849.5px;font-size:24.5px;color:#dadce0;">304</div>
<div class="t" style="left:1589.0px;top:849.5px;font-size:24.5px;color:#dadce0;">script</div>
<div class="t" style="left:1708.0px;top:849.5px;font-size:24.5px;color:#dadce0;text-decoration:underline;text-underline-offset:3px;text-decoration-thickness:2px;">channel</div>
<div class="t" style="left:1937.0px;top:849.5px;font-size:24.5px;color:#dadce0;">204 B</div>
<div class="t" style="left:2020.0px;top:849.5px;font-size:24.5px;color:#dadce0;">8 …</div>
<svg class="r" style="left:1034px;top:892px" width="20" height="24" viewBox="0 0 20 24"><rect x="1" y="1" width="18" height="22" rx="2" stroke="#e5844b" stroke-width="2" fill="none"/><path d="M8 10l-3 3 3 3M12 10l3 3-3 3" stroke="#e5844b" stroke-width="2" fill="none"/></svg>
<div class="t" style="left:1068.4px;top:891.5px;font-size:24.5px;color:#dadce0;transform:scaleX(0.9781);transform-origin:left top;">vendors-node_modules_em…</div>
<div class="t" style="left:1418.0px;top:891.5px;font-size:24.5px;color:#dadce0;">304</div>
<div class="t" style="left:1589.0px;top:891.5px;font-size:24.5px;color:#dadce0;">script</div>
<div class="t" style="left:1708.0px;top:891.5px;font-size:24.5px;color:#dadce0;text-decoration:underline;text-underline-offset:3px;text-decoration-thickness:2px;">app.js:1173</div>
<div class="t" style="left:1937.0px;top:891.5px;font-size:24.5px;color:#dadce0;">203 B</div>
<div class="t" style="left:2020.0px;top:891.5px;font-size:24.5px;color:#dadce0;">8 …</div>
<svg class="r" style="left:1034px;top:934px" width="20" height="24" viewBox="0 0 20 24"><rect x="1" y="1" width="18" height="22" rx="2" stroke="#e5844b" stroke-width="2" fill="none"/><path d="M8 10l-3 3 3 3M12 10l3 3-3 3" stroke="#e5844b" stroke-width="2" fill="none"/></svg>
<div class="t" style="left:1068.4px;top:933.5px;font-size:24.5px;color:#dadce0;transform:scaleX(0.9783);transform-origin:left top;">vendors-node_modules_gra…</div>
<div class="t" style="left:1418.0px;top:933.5px;font-size:24.5px;color:#dadce0;">304</div>
<div class="t" style="left:1589.0px;top:933.5px;font-size:24.5px;color:#dadce0;">script</div>
<div class="t" style="left:1708.0px;top:933.5px;font-size:24.5px;color:#dadce0;text-decoration:underline;text-underline-offset:3px;text-decoration-thickness:2px;">app.js:1173</div>
<div class="t" style="left:1937.0px;top:933.5px;font-size:24.5px;color:#dadce0;">202 B</div>
<div class="t" style="left:2020.0px;top:933.5px;font-size:24.5px;color:#dadce0;">3 …</div>
<svg class="r" style="left:1034px;top:976px" width="20" height="24" viewBox="0 0 20 24"><rect x="1" y="1" width="18" height="22" rx="2" stroke="#e5844b" stroke-width="2" fill="none"/><path d="M8 10l-3 3 3 3M12 10l3 3-3 3" stroke="#e5844b" stroke-width="2" fill="none"/></svg>
<div class="t" style="left:1068.4px;top:975.5px;font-size:24.5px;color:#dadce0;transform:scaleX(0.9735);transform-origin:left top;">hooks_useInput_ts-pages_S…</div>
<div class="t" style="left:1418.0px;top:975.5px;font-size:24.5px;color:#dadce0;">304</div>
<div class="t" style="left:1589.0px;top:975.5px;font-size:24.5px;color:#dadce0;">script</div>
<div class="t" style="left:1708.0px;top:975.5px;font-size:24.5px;color:#dadce0;text-decoration:underline;text-underline-offset:3px;text-decoration-thickness:2px;">app.js:1173</div>
<div class="t" style="left:1937.0px;top:975.5px;font-size:24.5px;color:#dadce0;">202 B</div>
<div class="t" style="left:2020.0px;top:975.5px;font-size:24.5px;color:#dadce0;">5 …</div>
<svg class="r" style="left:1034px;top:1018px" width="20" height="24" viewBox="0 0 20 24"><rect x="1" y="1" width="18" height="22" rx="2" stroke="#e5844b" stroke-width="2" fill="none"/><path d="M8 10l-3 3 3 3M12 10l3 3-3 3" stroke="#e5844b" stroke-width="2" fill="none"/></svg>
<div class="t" style="left:1068.4px;top:1017.5px;font-size:24.5px;color:#dadce0;transform:scaleX(0.9695);transform-origin:left top;">layouts_Workspace_index_t…</div>
<div class="t" style="left:1418.0px;top:1017.5px;font-size:24.5px;color:#dadce0;">304</div>
<div class="t" style="left:1589.0px;top:1017.5px;font-size:24.5px;color:#dadce0;">script</div>
<div class="t" style="left:1708.0px;top:1017.5px;font-size:24.5px;color:#dadce0;text-decoration:underline;text-underline-offset:3px;text-decoration-thickness:2px;">app.js:1173</div>
<div class="t" style="left:1937.0px;top:1017.5px;font-size:24.5px;color:#dadce0;">203 B</div>
<div class="t" style="left:2020.0px;top:1017.5px;font-size:24.5px;color:#dadce0;">5 …</div>
<svg class="r" style="left:1034px;top:1060px" width="20" height="24" viewBox="0 0 20 24"><rect x="1" y="1" width="18" height="22" rx="2" stroke="#80868b" stroke-width="2" fill="none"/></svg>
<div class="t" style="left:1068.4px;top:1059.5px;font-size:24.5px;color:#dadce0;">info?t=1644151458875</div>
<div class="t" style="left:1418.0px;top:1059.5px;font-size:24.5px;color:#dadce0;">200</div>
<div class="t" style="left:1589.0px;top:1059.5px;font-size:24.5px;color:#dadce0;">xhr</div>
<div class="t" style="left:1708.0px;top:1059.5px;font-size:24.5px;color:#dadce0;text-decoration:underline;text-underline-offset:3px;text-decoration-thickness:2px;">sockjs.js:1609</div>
<div class="t" style="left:1937.0px;top:1059.5px;font-size:24.5px;color:#dadce0;">390 B</div>
<div class="t" style="left:2020.0px;top:1059.5px;font-size:24.5px;color:#dadce0;">2 …</div>
<svg class="r" style="left:1034px;top:1102px" width="20" height="24" viewBox="0 0 20 24"><rect x="1" y="1" width="18" height="22" rx="2" stroke="#80868b" stroke-width="2" fill="none"/></svg>
<div class="t" style="left:1068.4px;top:1101.5px;font-size:24.5px;color:#dadce0;">info?t=1644151458876</div>
<div class="t" style="left:1418.0px;top:1101.5px;font-size:24.5px;color:#dadce0;">200</div>
<div class="t" style="left:1589.0px;top:1101.5px;font-size:24.5px;color:#dadce0;">xhr</div>
<div class="t" style="left:1708.0px;top:1101.5px;font-size:24.5px;color:#dadce0;text-decoration:underline;text-underline-offset:3px;text-decoration-thickness:2px;">sockjs.js:1609</div>
<div class="t" style="left:1937.0px;top:1101.5px;font-size:24.5px;color:#dadce0;">391 B</div>
<div class="t" style="left:2020.0px;top:1101.5px;font-size:24.5px;color:#dadce0;">2 …</div>
<svg class="r" style="left:1034px;top:1144px" width="20" height="24" viewBox="0 0 20 24"><rect x="1" y="1" width="18" height="22" rx="2" stroke="#e5844b" stroke-width="2" fill="none"/><path d="M8 10l-3 3 3 3M12 10l3 3-3 3" stroke="#e5844b" stroke-width="2" fill="none"/></svg>
<div class="t" style="left:1068.4px;top:1143.5px;font-size:24.5px;color:#dadce0;transform:scaleX(0.9721);transform-origin:left top;">pages_LogIn_index_tsx.js</div>
<div class="t" style="left:1418.0px;top:1143.5px;font-size:24.5px;color:#dadce0;">304</div>
<div class="t" style="left:1589.0px;top:1143.5px;font-size:24.5px;color:#dadce0;">script</div>
<div class="t" style="left:1708.0px;top:1143.5px;font-size:24.5px;color:#dadce0;text-decoration:underline;text-underline-offset:3px;text-decoration-thickness:2px;">app.js:1173</div>
<div class="t" style="left:1937.0px;top:1143.5px;font-size:24.5px;color:#dadce0;">202 B</div>
<div class="t" style="left:2020.0px;top:1143.5px;font-size:24.5px;color:#dadce0;">5 …</div>
<div class="r" style="left:2084px;top:728px;width:14px;height:14px;background:#e8eaed;"></div>
<div class="r" style="left:2100px;top:722px;width:24px;height:26px;background:#777a7e;"></div>
<div class="r" style="left:2124px;top:724px;width:4px;height:22px;background:#4d8ef6;"></div>
<div class="r" style="left:2180px;top:770px;width:6px;height:14px;background:#e8eaed;"></div>
<div class="r" style="left:2188px;top:764px;width:2px;height:26px;background:#777a7e;"></div>
<div class="r" style="left:2190px;top:764px;width:6px;height:26px;background:#4d8ef6;"></div>
<div class="r" style="left:2180px;top:812px;width:6px;height:14px;background:#e8eaed;"></div>
<div class="r" style="left:2186px;top:806px;width:6px;height:26px;background:#4d8ef6;"></div>
<div class="r" style="left:2180px;top:854px;width:8px;height:14px;background:#e8eaed;"></div>
<div class="r" style="left:2190px;top:848px;width:6px;height:26px;background:#777a7e;"></div>
<div class="r" style="left:2196px;top:848px;width:6px;height:26px;background:#4d8ef6;"></div>
<div class="r" style="left:2340px;top:898px;width:6px;height:10px;background:#e8eaed;"></div>
<div class="r" style="left:2348px;top:896px;width:1px;height:14px;background:#e5844b;"></div>
<div class="r" style="left:2352px;top:892px;width:6px;height:22px;background:#777a7e;"></div>
<div class="r" style="left:2358px;top:892px;width:4px;height:22px;background:#4d8ef6;"></div>
<div class="r" style="left:2340px;top:938px;width:6px;height:14px;background:#e8eaed;"></div>
<div class="r" style="left:2349px;top:934px;width:2px;height:22px;background:#777a7e;"></div>
<div class="r" style="left:2351px;top:934px;width:5px;height:22px;background:#4d8ef6;"></div>
<div class="r" style="left:2342px;top:982px;width:4px;height:10px;background:#e8eaed;"></div>
<div class="r" style="left:2349px;top:976px;width:4px;height:22px;background:#777a7e;"></div>
<div class="r" style="left:2353px;top:976px;width:5px;height:22px;background:#4d8ef6;"></div>
<div class="r" style="left:2342px;top:1024px;width:4px;height:10px;background:#e8eaed;"></div>
<div class="r" style="left:2348px;top:1022px;width:1px;height:14px;background:#e5844b;"></div>
<div class="r" style="left:2352px;top:1016px;width:4px;height:26px;background:#777a7e;"></div>
<div class="r" style="left:2356px;top:1016px;width:6px;height:26px;background:#4d8ef6;"></div>
<div class="r" style="left:2351px;top:1064px;width:5px;height:14px;background:#e8eaed;"></div>
<div class="r" style="left:2357px;top:1058px;width:1px;height:26px;background:#777a7e;"></div>
<div class="r" style="left:2358px;top:1060px;width:6px;height:22px;background:#4d8ef6;"></div>
<div class="r" style="left:2352px;top:1108px;width:4px;height:10px;background:#e8eaed;"></div>
<div class="r" style="left:2357px;top:1100px;width:1px;height:26px;background:#777a7e;"></div>
<div class="r" style="left:2358px;top:1102px;width:6px;height:22px;background:#4d8ef6;"></div>
<div class="r" style="left:2376px;top:1148px;width:8px;height:14px;background:#e8eaed;"></div>
<div class="r" style="left:2386px;top:1142px;width:4px;height:26px;background:#777a7e;"></div>
<div class="r" style="left:2390px;top:1144px;width:4px;height:22px;background:#4d8ef6;"></div>
<div class="r" style="left:2451px;top:680px;width:5px;height:395px;background:#5f6368;border-radius:3px;"></div>
<div class="r" style="left:1015px;top:1182px;width:1442px;height:2px;background:#494c50;"></div>
<div class="r" style="left:1015px;top:1184px;width:1442px;height:51px;background:#292a2d;"></div>
<div class="r" style="left:1015px;top:1235px;width:1442px;height:4px;background:#45484c;"></div>
<div class="t" style="left:1039.0px;top:1198.4px;font-size:24px;color:#9aa0a6;transform:scaleX(0.9912);transform-origin:left top;">15 requests</div>
<div class="r" style="left:1183px;top:1195px;width:1px;height:31px;background:#494c50;"></div>
<div class="t" style="left:1201.6px;top:1198.4px;font-size:24px;color:#9aa0a6;transform:scaleX(1.0074);transform-origin:left top;">2.5 kB transferred</div>
<div class="r" style="left:1413px;top:1195px;width:1px;height:31px;background:#494c50;"></div>
<div class="t" style="left:1432.0px;top:1198.4px;font-size:24px;color:#9aa0a6;transform:scaleX(0.9995);transform-origin:left top;">3.8 MB resources</div>
<div class="r" style="left:1639px;top:1195px;width:1px;height:31px;background:#494c50;"></div>
<div class="t" style="left:1659.0px;top:1198.4px;font-size:24px;color:#9aa0a6;transform:scaleX(0.9959);transform-origin:left top;">Finish: 240 ms</div>
<div class="r" style="left:1833px;top:1195px;width:1px;height:31px;background:#494c50;"></div>
<div class="t" style="left:1853.0px;top:1198.4px;font-size:24px;color:#4d8ef6;transform:scaleX(1.0072);transform-origin:left top;">DOMContentLoaded: 201 ms</div>
<div class="r" style="left:2187px;top:1195px;width:1px;height:31px;background:#494c50;"></div>
<div class="t" style="left:2207.0px;top:1198.4px;font-size:24px;color:#e5844b;transform:scaleX(0.9950);transform-origin:left top;">Load: 233 ms</div>
<div class="r" style="left:1015px;top:1239px;width:1442px;height:53px;background:#292a2d;"></div>
<div class="r" style="left:1015px;top:1292px;width:1442px;height:1px;background:#494c50;"></div>
<svg class="r" style="left:1042px;top:1253px" width="14" height="30" viewBox="0 0 14 30"><circle cx="7" cy="4" r="3" fill="#9aa0a6"/><circle cx="7" cy="14.5" r="3" fill="#9aa0a6"/><circle cx="7" cy="25" r="3" fill="#9aa0a6"/></svg>
<div class="t" style="left:1092.0px;top:1253.5px;font-size:24px;color:#9aa0a6;transform:scaleX(0.9883);transform-origin:left top;">Console</div>
<div class="r" style="left:1200px;top:1240px;width:126px;height:52px;background:#000000;"></div>
<div class="t" style="left:1220.0px;top:1253.5px;font-size:24px;color:#ffffff;transform:scaleX(0.9660);transform-origin:left top;">Issues</div>
<svg class="r" style="left:1302px;top:1260px" width="14" height="14" viewBox="0 0 14 14"><path d="M1.5 1.5l11 11M12.5 1.5l-11 11" stroke="#ffffff" stroke-width="2.6"/></svg>
<svg class="r" style="left:2434px;top:1256px" width="22" height="22" viewBox="0 0 22 22"><path d="M2 2l18 18M20 2L2 20" stroke="#9aa0a6" stroke-width="3"/></svg>
<div class="r" style="left:1015px;top:1293px;width:1442px;height:53px;background:#292a2d;"></div>
<div class="r" style="left:1866px;top:1309px;width:24px;height:24px;background:#303134;border:2px solid #80868b;box-sizing:border-box;border-radius:4px;"></div>
<div class="t" style="left:1901.0px;top:1307.5px;font-size:24px;color:#9aa0a6;transform:scaleX(1.0151);transform-origin:left top;">Include third-party cookie issues</div>
<div class="r" style="left:2269px;top:1305px;width:1px;height:30px;background:#494c50;"></div>
<svg class="r" style="left:2290px;top:1308px" width="24" height="24" viewBox="0 0 24 24"><path d="M1 1h22v17H7l-6 5z" fill="#e5844b"/><path d="M8 5l8 8M16 5l-8 8" stroke="#202124" stroke-width="2.4"/></svg>
<div class="t" style="left:2320.0px;top:1306.7px;font-size:24px;color:#9aa0a6;">0</div>
<svg class="r" style="left:2348px;top:1308px" width="24" height="24" viewBox="0 0 24 24"><path d="M1 1h22v17H7l-6 5z" fill="#e5844b"/><path d="M12 4v7" stroke="#202124" stroke-width="3"/><circle cx="12" cy="14.5" r="1.6" fill="#202124"/></svg>
<div class="t" style="left:2378.0px;top:1306.7px;font-size:24px;color:#9aa0a6;">0</div>
<svg class="r" style="left:2404px;top:1308px" width="24" height="24" viewBox="0 0 24 24"><path d="M1 1h22v17H7l-6 5z" fill="#4d8ef6"/><path d="M5 7h14M5 12h9" stroke="#202124" stroke-width="2.4"/></svg>
<div class="t" style="left:2434.0px;top:1306.7px;font-size:24px;color:#9aa0a6;">2</div>
<div class="r" style="left:1015px;top:1346px;width:1442px;height:59px;background:#3a4250;"></div>
<div class="r" style="left:1015px;top:1405px;width:1442px;height:58px;background:#202124;"></div>
<div class="r" style="left:1015px;top:1463px;width:1442px;height:2px;background:#35363a;"></div>
<svg class="r" style="left:1035px;top:1369px" width="14" height="16" viewBox="0 0 14 16"><path d="M1 1l12 7-12 7z" fill="#9aa0a6"/></svg>
<svg class="r" style="left:1069px;top:1360px" width="31" height="31" viewBox="0 0 31 31"><path d="M5 1h21a4 4 0 0 1 4 4v14a4 4 0 0 1-4 4H8l-7 7V5a4 4 0 0 1 4-4z" fill="#4d8ef6"/><path d="M7 9h17M7 15h10" stroke="#2a2f3a" stroke-width="2.6"/></svg>
<div class="r" style="left:1114px;top:1361px;width:38px;height:29px;background:#2a3546;border:2px solid #3f6db0;box-sizing:border-box;border-radius:15px;"></div>
<div class="t" style="left:1127.5px;top:1367.9px;font-size:19px;color:#e8eaed;">1</div>
<svg class="r" style="left:1035px;top:1428px" width="14" height="16" viewBox="0 0 14 16"><path d="M1 1l12 7-12 7z" fill="#9aa0a6"/></svg>
<svg class="r" style="left:1069px;top:1419px" width="31" height="31" viewBox="0 0 31 31"><path d="M5 1h21a4 4 0 0 1 4 4v14a4 4 0 0 1-4 4H8l-7 7V5a4 4 0 0 1 4-4z" fill="#4d8ef6"/><path d="M7 9h17M7 15h10" stroke="#2a2f3a" stroke-width="2.6"/></svg>
<div class="r" style="left:1114px;top:1420px;width:38px;height:29px;background:#2a3546;border:2px solid #3f6db0;box-sizing:border-box;border-radius:15px;"></div>
<div class="t" style="left:1127.5px;top:1426.9px;font-size:19px;color:#e8eaed;">1</div>
<div class="t" style="left:1167.0px;top:1362.3px;font-size:28px;color:#e8eaed;transform:scaleX(1.0041);transform-origin:left top;">Audit usage of navigator.userAgent, navigator.appVersion, and navigator.platform</div>
<div class="t" style="left:1167.0px;top:1420.3px;font-size:28px;color:#e8eaed;transform:scaleX(1.0087);transform-origin:left top;">Page layout may be unexpected due to Quirks Mode</div>
<div class="r" style="left:1014px;top:492px;width:4px;height:743px;background:#3d4450;"></div>
<div class="r" style="left:1014px;top:138px;width:2px;height:1499px;background:#3a3f47;"></div>
<div class="r" style="left:0px;top:1637px;width:2456px;height:1px;background:#505357;"></div>
<div class="r" style="left:0px;top:1638px;width:2456px;height:2px;background:#0a0b0e;"></div>
<div class="r" style="left:920px;top:1640px;width:1536px;height:26px;background:#0a4272;"></div>
<div class="r" style="left:920px;top:1640px;width:68px;height:26px;background:#1f3045;"></div>
<svg class="r" style="left:944px;top:1650px" width="24" height="20" viewBox="0 0 24 20"><path d="M3 3l7 7-7 7M21 3l-7 7 7 7" stroke="#8a9096" stroke-width="2.2" fill="none"/></svg>
<svg class="r" style="left:1006px;top:1647px" width="24" height="24" viewBox="0 0 24 24"><circle cx="6" cy="5" r="3.5" stroke="#c0c4c8" stroke-width="2" fill="none"/><circle cx="18" cy="11" r="3.5" stroke="#c0c4c8" stroke-width="2" fill="none"/><path d="M6 9v15M18 15c0 5-12 4-12 9" stroke="#c0c4c8" stroke-width="2" fill="none"/></svg>
<div class="t" style="left:1040.0px;top:1650.8px;font-size:25px;color:#b5bac0;">master*+</div>
<svg class="r" style="left:1175px;top:1653px" width="30" height="18" viewBox="0 0 30 18"><path d="M4 16A11 11 0 0 1 24 8M26 12A11 11 0 0 1 6 18" stroke="#c0c4c8" stroke-width="2.4" fill="none"/><path d="M22 3l4 6-7 1z" fill="#c0c4c8"/></svg>
<svg class="r" style="left:1236px;top:1653px" width="26" height="18" viewBox="0 0 26 18"><circle cx="13" cy="13" r="11" stroke="#c0c4c8" stroke-width="2.2" fill="none"/><path d="M8 8l10 10M18 8L8 18" stroke="#c0c4c8" stroke-width="2"/></svg>
<div class="t" style="left:1270.0px;top:1650.8px;font-size:25px;color:#b5bac0;">0</div>
<svg class="r" style="left:1294px;top:1653px" width="26" height="18" viewBox="0 0 26 18"><path d="M13 2L24 22H2z" stroke="#c0c4c8" stroke-width="2.2" fill="none"/><path d="M13 8v6" stroke="#c0c4c8" stroke-width="2"/></svg>
<div class="t" style="left:1328.0px;top:1650.8px;font-size:25px;color:#b5bac0;">0</div>
<div class="t" style="left:1571.0px;top:1650.8px;font-size:25px;color:#b5bac0;transform:scaleX(0.9370);transform-origin:left top;">줄 81, 열 22</div>
<div class="t" style="left:1731.0px;top:1650.8px;font-size:25px;color:#b5bac0;transform:scaleX(0.9254);transform-origin:left top;">공백: 4</div>
<div class="t" style="left:1839.0px;top:1650.8px;font-size:25px;color:#b5bac0;transform:scaleX(0.9885);transform-origin:left top;">UTF-8</div>
<div class="t" style="left:1943.0px;top:1650.8px;font-size:25px;color:#b5bac0;">LF</div>
<div class="t" style="left:2005.0px;top:1650.8px;font-size:25px;color:#b5bac0;transform:scaleX(0.9306);transform-origin:left top;">{ }</div>
<div class="t" style="left:2042.0px;top:1650.8px;font-size:25px;color:#b5bac0;transform:scaleX(1.0059);transform-origin:left top;">TypeScript React</div>
<svg class="r" style="left:2268px;top:1653px" width="26" height="18" viewBox="0 0 26 18"><circle cx="12" cy="12" r="10.5" stroke="#c0c4c8" stroke-width="2.2" fill="none"/><path d="M5 19L19 5" stroke="#c0c4c8" stroke-width="2"/></svg>
<div class="t" style="left:2301.6px;top:1650.8px;font-size:25px;color:#b5bac0;transform:scaleX(1.0381);transform-origin:left top;">Port : 5500</div>
<svg class="r" style="left:0px;top:1639px" width="920" height="27" viewBox="0 0 920 27"><path d="M34 0h10l14 27H46z" fill="#1c4a78"/><path d="M56 0h3l2 27h-3z" fill="#5a6a7a"/><path d="M91 0h7v27h-5z" fill="#34495e"/><rect x="100" y="2" width="500" height="25" fill="#0a1420" opacity="0.7"/></svg>
</body></html>
